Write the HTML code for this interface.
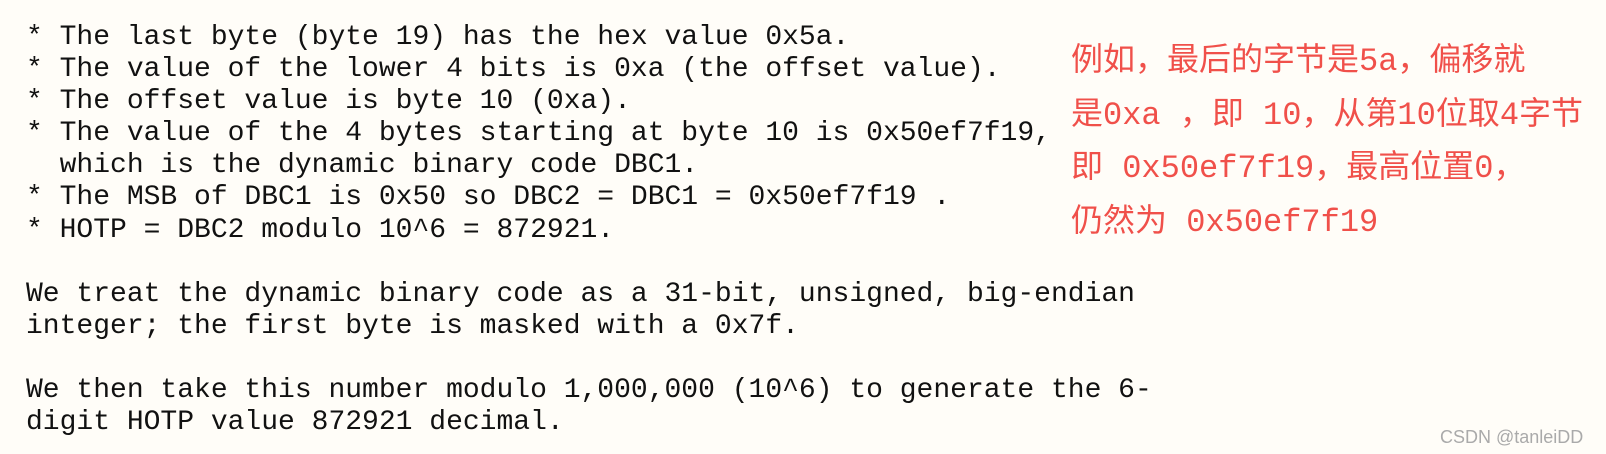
<!DOCTYPE html>
<html><head><meta charset="utf-8"><style>
html,body{margin:0;padding:0;width:1606px;height:454px;overflow:hidden;}
body{background:#fffdf8;position:relative;}
pre{position:absolute;left:26px;top:22px;margin:0;font-family:"Liberation Mono",monospace;font-size:28px;line-height:32.1px;color:#111;}
.cn{position:absolute;left:1071px;top:35px;width:540px;font-family:"Liberation Mono","Noto Sans CJK SC",monospace;font-size:32px;line-height:53.5px;color:#f0504a;white-space:nowrap;}
.wm{position:absolute;left:1440px;top:426px;font-family:"Liberation Sans",sans-serif;font-size:18px;line-height:22px;color:#aaa;}
</style></head><body>
<pre>* The last byte (byte 19) has the hex value 0x5a.
* The value of the lower 4 bits is 0xa (the offset value).
* The offset value is byte 10 (0xa).
* The value of the 4 bytes starting at byte 10 is 0x50ef7f19,
  which is the dynamic binary code DBC1.
* The MSB of DBC1 is 0x50 so DBC2 = DBC1 = 0x50ef7f19 .
* HOTP = DBC2 modulo 10^6 = 872921.

We treat the dynamic binary code as a 31-bit, unsigned, big-endian
integer; the first byte is masked with a 0x7f.

We then take this number modulo 1,000,000 (10^6) to generate the 6-
digit HOTP value 872921 decimal.</pre>
<div class="cn">例如，最后的字节是5a，偏移就<br>是0xa ，即 10，从第10位取4字节<br>即 0x50ef7f19，最高位置0，<br>仍然为 0x50ef7f19</div>
<div class="wm">CSDN @tanleiDD</div>
</body></html>
